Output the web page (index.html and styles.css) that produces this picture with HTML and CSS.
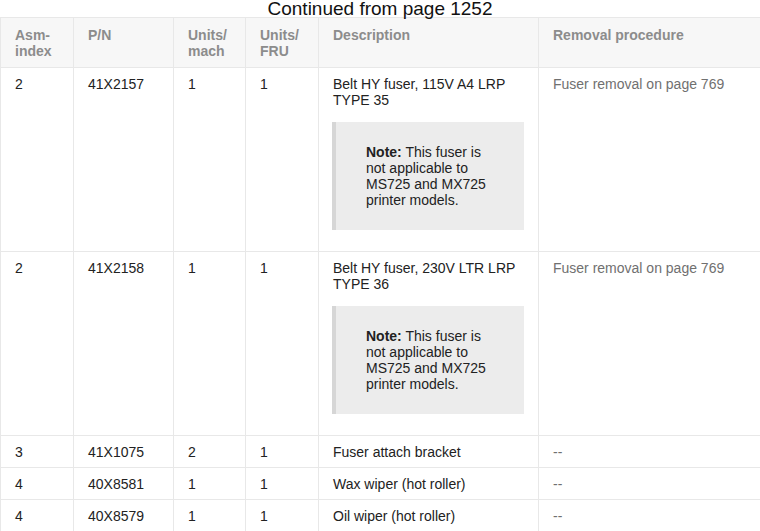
FILE: index.html
```html
<!DOCTYPE html>
<html>
<head>
<meta charset="utf-8">
<link rel="stylesheet" href="styles.css">
</head>
<body>
<div class="title">Continued from page 1252</div>
<table class="parts">
  <colgroup>
    <col class="c1"><col class="c2"><col class="c3"><col class="c4"><col class="c5"><col class="c6">
  </colgroup>
  <thead>
    <tr>
      <th>Asm-<br>index</th>
      <th>P/N</th>
      <th>Units/<br>mach</th>
      <th>Units/<br>FRU</th>
      <th>Description</th>
      <th>Removal procedure</th>
    </tr>
  </thead>
  <tbody>
    <tr>
      <td>2</td>
      <td>41X2157</td>
      <td>1</td>
      <td>1</td>
      <td>Belt HY fuser, 115V A4 LRP TYPE 35
        <div class="note"><b>Note:</b> This fuser is not applicable to MS725 and MX725 printer models.</div>
      </td>
      <td class="proc">Fuser removal on page 769</td>
    </tr>
    <tr>
      <td>2</td>
      <td>41X2158</td>
      <td>1</td>
      <td>1</td>
      <td>Belt HY fuser, 230V LTR LRP TYPE 36
        <div class="note"><b>Note:</b> This fuser is not applicable to MS725 and MX725 printer models.</div>
      </td>
      <td class="proc">Fuser removal on page 769</td>
    </tr>
    <tr>
      <td>3</td>
      <td>41X1075</td>
      <td>2</td>
      <td>1</td>
      <td>Fuser attach bracket</td>
      <td class="proc">--</td>
    </tr>
    <tr>
      <td>4</td>
      <td>40X8581</td>
      <td>1</td>
      <td>1</td>
      <td>Wax wiper (hot roller)</td>
      <td class="proc">--</td>
    </tr>
    <tr>
      <td>4</td>
      <td>40X8579</td>
      <td>1</td>
      <td>1</td>
      <td>Oil wiper (hot roller)</td>
      <td class="proc">--</td>
    </tr>
  </tbody>
</table>
</body>
</html>
```
FILE: styles.css
```css
html, body {
  margin: 0;
  padding: 0;
  background: #ffffff;
}
body {
  font-family: "Liberation Sans", Arial, sans-serif;
  color: #222222;
}
.title {
  text-align: center;
  font-size: 19px;
  line-height: 19px;
  height: 18px;
  margin-top: -1px;
  color: #111111;
}
.parts {
  border-collapse: collapse;
  width: 760px;
  table-layout: fixed;
  font-size: 14px;
  line-height: 16px;
}
.c1 { width: 73px; }
.c2 { width: 100px; }
.c3 { width: 72px; }
.c4 { width: 73px; }
.c5 { width: 220px; }
.c6 { width: 222px; }
.parts th,
.parts td {
  border: 1px solid #e8e8e8;
  padding: 8px 14px 7px 14px;
  text-align: left;
  vertical-align: top;
}
.parts th {
  background: #f7f7f7;
  color: #8c8c8c;
  font-weight: bold;
  padding: 9px 14px 8px 14px;
}
.parts td.proc {
  color: #707070;
}
.note {
  margin: 14px 0 14px -1px;
  background: #ececec;
  border-left: 4px solid #d6d6d6;
  padding: 22px 30px 22px 30px;
  color: #222222;
}
```
